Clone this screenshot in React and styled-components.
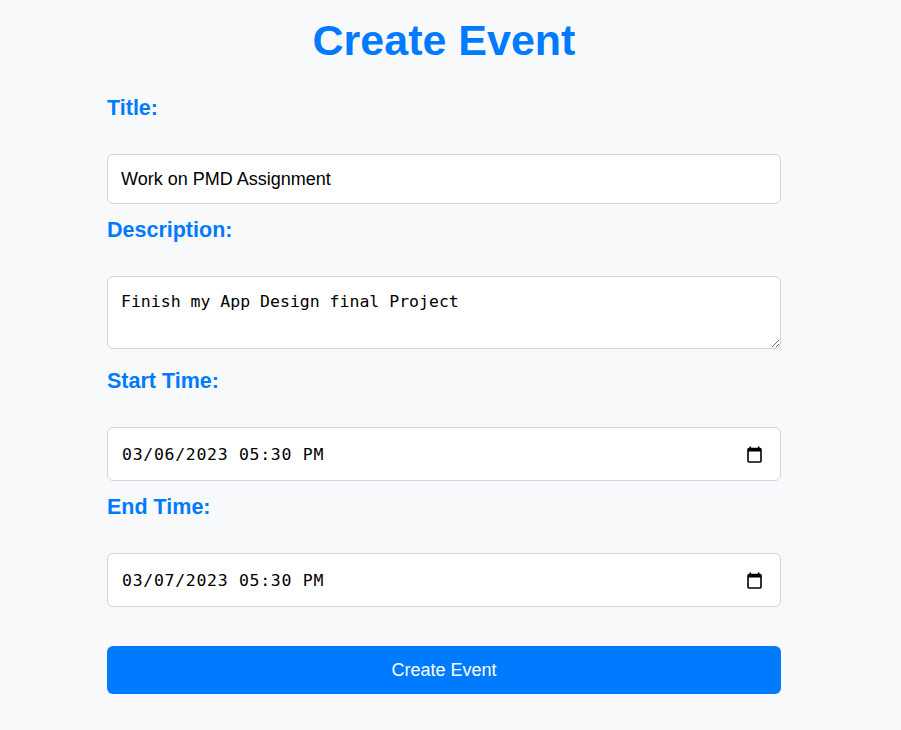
import React, { useState } from 'react'
import styled, { createGlobalStyle } from 'styled-components'

const GlobalStyle = createGlobalStyle`
    body {
        margin: 0;
        background: #f8f9fa;
        font-family: "Liberation Sans", Arial, sans-serif;
    }
`

const Page = styled.div`
    display: flex;
    justify-content: center;
    padding: 15px 13px 40px 0;
`

const Form = styled.form`
    width: 674px;
    display: flex;
    flex-direction: column;
`

const Heading = styled.h1`
    margin: 0 0 31px;
    font-size: 43px;
    line-height: 50px;
    font-weight: bold;
    color: #007bff;
    text-align: center;
`

const Label = styled.label`
    display: block;
    margin: ${p => (p.first ? '0' : '14px')} 0 34px;
    font-size: 21.5px;
    line-height: 24px;
    font-weight: bold;
    color: #007bff;
`

const TextInput = styled.input`
    box-sizing: border-box;
    height: 50px;
    width: 100%;
    padding: 0 13px;
    border: 1px solid #ced4da;
    border-radius: 6px;
    background: #fff;
    font-family: "Liberation Sans", Arial, sans-serif;
    font-size: 18px;
    color: #000;
    outline: none;
`

const TextArea = styled.textarea`
    box-sizing: border-box;
    display: block;
    height: 73px;
    width: 100%;
    margin-bottom: 6px;
    padding: 14px 13px 10px;
    border: 1px solid #ced4da;
    border-radius: 6px;
    background: #fff;
    font-family: "DejaVu Sans Mono", monospace;
    font-size: 16.5px;
    line-height: 22px;
    color: #000;
    outline: none;
`

const DateField = styled.div`
    box-sizing: border-box;
    height: 54px;
    display: flex;
    align-items: center;
    padding: 0 18px 0 14px;
    border: 1px solid #ced4da;
    border-radius: 6px;
    background: #fff;

    input {
        flex: 1;
        min-width: 0;
        border: none;
        outline: none;
        padding: 0;
        background: transparent;
        font-family: "DejaVu Sans Mono", monospace;
        font-size: 16.5px;
        letter-spacing: 0.7px;
        color: #000;
    }

    svg {
        flex: none;
    }
`

const SubmitButton = styled.button`
    margin-top: 39px;
    height: 48px;
    border: none;
    border-radius: 6px;
    background: #007bff;
    color: #fff;
    font-family: "Liberation Sans", Arial, sans-serif;
    font-size: 18px;
    cursor: pointer;
`

const CalendarIcon = () => (
    <svg width="15" height="17" viewBox="0 0 15 17">
        <rect x="2.5" y="0.5" width="1.6" height="3" fill="#000" />
        <rect x="10.9" y="0.5" width="1.6" height="3" fill="#000" />
        <rect x="1" y="2.5" width="13" height="13.5" rx="1" fill="none" stroke="#000" strokeWidth="1.6" />
        <rect x="1" y="2.5" width="13" height="3" fill="#000" />
    </svg>
)

export default function App() {
    const [title, setTitle] = useState('Work on PMD Assignment')
    const [desc, setDesc] = useState('Finish my App Design final Project')
    const [start, setStart] = useState('03/06/2023 05:30 PM')
    const [end, setEnd] = useState('03/07/2023 05:30 PM')

    return (
        <Page>
            <GlobalStyle />
            <Form onSubmit={e => e.preventDefault()}>
                <Heading>Create Event</Heading>

                <Label first htmlFor="title">Title:</Label>
                <TextInput id="title" value={title} onChange={e => setTitle(e.target.value)} />

                <Label htmlFor="desc">Description:</Label>
                <TextArea id="desc" value={desc} onChange={e => setDesc(e.target.value)} />

                <Label htmlFor="start">Start Time:</Label>
                <DateField>
                    <input id="start" value={start} onChange={e => setStart(e.target.value)} />
                    <CalendarIcon />
                </DateField>

                <Label htmlFor="end">End Time:</Label>
                <DateField>
                    <input id="end" value={end} onChange={e => setEnd(e.target.value)} />
                    <CalendarIcon />
                </DateField>

                <SubmitButton type="submit">Create Event</SubmitButton>
            </Form>
        </Page>
    )
}
